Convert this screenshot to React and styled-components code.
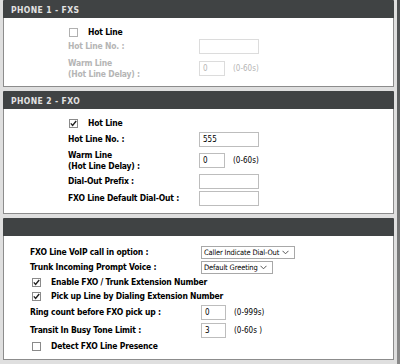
import styled, { createGlobalStyle } from "styled-components";

const Global = createGlobalStyle`
  html, body {
    margin: 0;
    padding: 0;
    background: #dfdfdf;
  }
  body {
    font-family: "DejaVu Sans Condensed", "DejaVu Sans", sans-serif;
    font-size: 8.5px;
    color: #000;
  }
`;

const Frame = styled.div`
  display: flex;
  height: 364px;
  overflow: hidden;
`;

const Main = styled.div`
  width: 391px;
  margin-left: 3px;
  display: flex;
  flex-direction: column;
  gap: 4px;
`;

const Edge = styled.div`
  width: 3px;
  margin-left: 3px;
  background: linear-gradient(#4a4d4e, #8a8a8a);
`;

const Box = styled.section`
  border: 1px solid #8c8c8c;
  border-top-color: #404344;
  background: #fff;
`;

const Header = styled.div`
  height: 17px;
  background: #404344;
  color: #e2e2e2;
  font-weight: bold;
  font-size: 8.5px;
  letter-spacing: 0.4px;
  display: flex;
  align-items: center;
  padding-left: 8px;
  margin: 0 -1px;
`;

const Body = styled.div`
  display: flex;
  flex-direction: column;
  padding: ${(p) => p.$pad};
`;

const Row = styled.div`
  display: flex;
  align-items: center;
  min-height: ${(p) => p.$h}px;
  margin-top: ${(p) => p.$gap || 0}px;
  padding-left: ${(p) => p.$indent}px;
`;

const Label = styled.div`
  width: ${(p) => p.$w}px;
  font-weight: bold;
  line-height: 10.5px;
  letter-spacing: -0.2px;
  color: ${(p) => (p.$off ? "#b5b5b5" : "#000")};
  white-space: nowrap;
`;

const Input = styled.div`
  box-sizing: border-box;
  width: ${(p) => p.$w}px;
  height: 15px;
  border: 1px solid ${(p) => (p.$off ? "#dcdcdc" : "#bdbdbd")};
  background: #fff;
  color: ${(p) => (p.$off ? "#b5b5b5" : "#000")};
  font-size: 8px;
  display: flex;
  align-items: center;
  padding-left: 3px;
`;

const Hint = styled.span`
  margin-left: 8px;
  font-size: 8px;
  color: ${(p) => (p.$off ? "#b5b5b5" : "#000")};
`;

const Select = styled.div`
  box-sizing: border-box;
  width: ${(p) => p.$w}px;
  height: 13px;
  border: 1px solid #a8a8a8;
  background: #fff;
  font-size: 7.5px;
  letter-spacing: -0.15px;
  display: flex;
  align-items: center;
  justify-content: space-between;
  padding: 0 5px 0 2px;
  white-space: nowrap;
`;

const Check = styled.span`
  box-sizing: border-box;
  width: 9px;
  height: 9px;
  border: 1px solid ${(p) => (p.$off ? "#b0b0b0" : "#8a8a8a")};
  background: #fff;
  display: inline-flex;
  align-items: center;
  justify-content: center;
  margin-left: 1px;
  margin-right: ${(p) => p.$gap}px;
`;

const CheckText = styled.span`
  font-weight: bold;
  letter-spacing: -0.2px;
  color: #000;
  white-space: nowrap;
`;

const Chevron = () => (
  <svg width="7" height="5" viewBox="0 0 7 5">
    <path d="M0.5 0.8 L3.5 3.8 L6.5 0.8" fill="none" stroke="#555" strokeWidth="1" />
  </svg>
);

const CheckBox = ({ checked, off }) => (
  <Check $off={off} $gap={10}>
    {checked && (
      <svg width="7" height="7" viewBox="0 0 7 7">
        <path d="M0.8 3.4 L2.6 5.4 L6.2 1" fill="none" stroke="#222" strokeWidth="1.4" />
      </svg>
    )}
  </Check>
);

export default function App() {
  return (
    <>
      <Global />
      <Frame>
        <Main>
          <Box>
            <Header>PHONE 1 - FXS</Header>
            <Body $pad="8px 0 7px">
              <Row $h={12} $indent={64}>
                <CheckBox off />
                <CheckText>Hot Line</CheckText>
              </Row>
              <Row $h={15} $gap={1} $indent={64}>
                <Label $w={131} $off>Hot Line No. :</Label>
                <Input $w={60} $off />
              </Row>
              <Row $h={21} $gap={4} $indent={64}>
                <Label $w={131} $off>
                  Warm Line
                  <br />
                  (Hot Line Delay) :
                </Label>
                <Input $w={26} $off>0</Input>
                <Hint $off>(0-60s)</Hint>
              </Row>
            </Body>
          </Box>

          <Box>
            <Header>PHONE 2 - FXO</Header>
            <Body $pad="8px 0 7px">
              <Row $h={12} $indent={64}>
                <CheckBox checked />
                <CheckText>Hot Line</CheckText>
              </Row>
              <Row $h={15} $gap={3} $indent={64}>
                <Label $w={131}>Hot Line No. :</Label>
                <Input $w={60}>555</Input>
              </Row>
              <Row $h={21} $gap={3} $indent={64}>
                <Label $w={131}>
                  Warm Line
                  <br />
                  (Hot Line Delay) :
                </Label>
                <Input $w={26}>0</Input>
                <Hint>(0-60s)</Hint>
              </Row>
              <Row $h={15} $gap={3} $indent={64}>
                <Label $w={131}>Dial-Out Prefix :</Label>
                <Input $w={60} />
              </Row>
              <Row $h={15} $gap={2} $indent={64}>
                <Label $w={131}>FXO Line Default Dial-Out :</Label>
                <Input $w={60} />
              </Row>
            </Body>
          </Box>

          <Box>
            <Header />
            <Body $pad="9px 0 7px">
              <Row $h={14} $indent={26}>
                <Label $w={171}>FXO Line VoIP call in option :</Label>
                <Select $w={94}>
                  Caller Indicate Dial-Out <Chevron />
                </Select>
              </Row>
              <Row $h={14} $gap={1} $indent={26}>
                <Label $w={171}>Trunk Incoming Prompt Voice :</Label>
                <Select $w={72}>
                  Default Greeting <Chevron />
                </Select>
              </Row>
              <Row $h={12} $gap={2} $indent={27}>
                <CheckBox checked />
                <CheckText>Enable FXO / Trunk Extension Number</CheckText>
              </Row>
              <Row $h={12} $gap={2} $indent={27}>
                <CheckBox checked />
                <CheckText>Pick up Line by Dialing Extension Number</CheckText>
              </Row>
              <Row $h={15} $gap={3} $indent={26}>
                <Label $w={171}>Ring count before FXO pick up :</Label>
                <Input $w={25}>0</Input>
                <Hint>(0-999s)</Hint>
              </Row>
              <Row $h={15} $gap={3} $indent={26}>
                <Label $w={171}>Transit In Busy Tone Limit :</Label>
                <Input $w={25}>3</Input>
                <Hint>(0-60s )</Hint>
              </Row>
              <Row $h={12} $gap={2} $indent={27}>
                <CheckBox />
                <CheckText>Detect FXO Line Presence</CheckText>
              </Row>
            </Body>
          </Box>
        </Main>
        <Edge />
      </Frame>
    </>
  );
}
